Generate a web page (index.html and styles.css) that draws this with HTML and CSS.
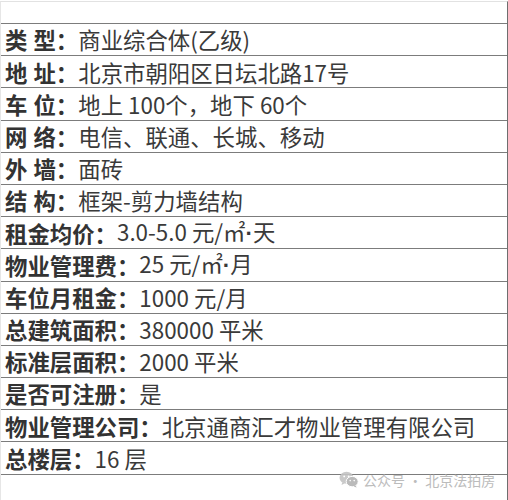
FILE: index.html
```html
<!DOCTYPE html>
<html lang="zh">
<head>
<meta charset="utf-8">
<link rel="stylesheet" href="styles.css">
</head>
<body>
<div class="sheet">
  <div class="row blank"></div>
  <div class="row"><span class="k">类 型：</span><span class="v">商业综合体(乙级)</span></div>
  <div class="row"><span class="k">地 址：</span><span class="v">北京市朝阳区日坛北路17号</span></div>
  <div class="row"><span class="k">车 位：</span><span class="v">地上 100个，地下 60个</span></div>
  <div class="row"><span class="k">网 络：</span><span class="v">电信、联通、长城、移动</span></div>
  <div class="row"><span class="k">外 墙：</span><span class="v">面砖</span></div>
  <div class="row"><span class="k">结 构：</span><span class="v">框架-剪力墙结构</span></div>
  <div class="row"><span class="k">租金均价：</span><span class="v">3.0-5.0 元/㎡<span class="dot">·</span>天</span></div>
  <div class="row"><span class="k">物业管理费：</span><span class="v">25 元/㎡<span class="dot">·</span>月</span></div>
  <div class="row"><span class="k">车位月租金：</span><span class="v">1000 元/月</span></div>
  <div class="row"><span class="k">总建筑面积：</span><span class="v">380000 平米</span></div>
  <div class="row"><span class="k">标准层面积：</span><span class="v">2000 平米</span></div>
  <div class="row"><span class="k">是否可注册：</span><span class="v">是</span></div>
  <div class="row"><span class="k">物业管理公司：</span><span class="v">北京通商汇才物业管理有限公司</span></div>
  <div class="row"><span class="k">总楼层：</span><span class="v">16 层</span></div>
  <div class="row tail"></div>
</div>
<div class="mark">
  <svg class="wx" width="20" height="17" viewBox="0 0 20 17">
    <ellipse cx="7.5" cy="6.8" rx="7" ry="6" fill="#c4c4c4"/>
    <path d="M3.2 11.2 L2.6 14 L5.8 12.3 Z" fill="#c4c4c4"/>
    <ellipse cx="13.2" cy="10.6" rx="6" ry="5.2" fill="#b3b3b3" stroke="#fff" stroke-width="1"/>
    <path d="M16.6 14.6 L17.6 16.6 L14.6 15.4 Z" fill="#b3b3b3"/>
    <circle cx="5.2" cy="5.4" r="0.9" fill="#fff"/>
    <circle cx="9.6" cy="5.4" r="0.9" fill="#fff"/>
    <circle cx="11.2" cy="9.6" r="0.8" fill="#fff"/>
    <circle cx="15.2" cy="9.6" r="0.8" fill="#fff"/>
  </svg>
  <span class="mark-text">公众号 · 北京法拍房</span>
</div>
</body>
</html>
```
FILE: styles.css
```css
html, body {
  margin: 0;
  padding: 0;
  background: #fff;
}
body {
  width: 508px;
  height: 500px;
  overflow: hidden;
  position: relative;
  font-family: "Noto Sans CJK SC", "Noto Sans", sans-serif;
  color: #333;
}
.sheet {
  margin-top: 1px;
  width: 506px;
  border-top: 1px solid #e2e2e2;
  border-left: 1px solid #e6e6e6;
  border-right: 1px solid #6e6e6e;
  display: flex;
  flex-direction: column;
}
.row {
  height: 31.2px;
  border-bottom: 1px solid #7c7c7c;
  display: flex;
  align-items: center;
  padding-left: 4px;
  font-size: 22.4px;
  line-height: 1;
  white-space: nowrap;
}
.row.blank {
  height: 21px;
}
.row.tail {
  height: 40px;
}
.k {
  font-weight: 700;
  color: #333;
  word-spacing: 1px;
}
.v {
  font-weight: 400;
  color: #3a3a3a;
}
.dot {
  font-family: "Liberation Sans", sans-serif;
  font-weight: 700;
}
.mark {
  position: absolute;
  left: 339px;
  top: 471px;
  display: flex;
  align-items: center;
  gap: 4px;
  opacity: 0.9;
}
.mark-text {
  font-size: 14px;
  line-height: 1;
  color: #b5b5b5;
}
```
